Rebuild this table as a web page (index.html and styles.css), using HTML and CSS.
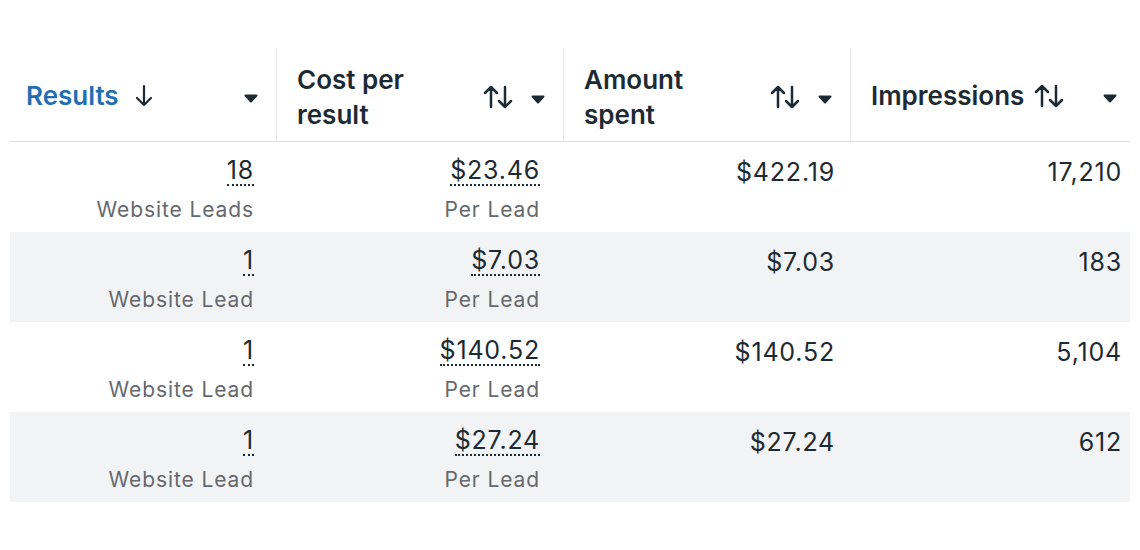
FILE: index.html
```html
<!DOCTYPE html>
<html>
<head>
<meta charset="utf-8">
<link rel="stylesheet" href="styles.css">
</head>
<body>
<div class="table">
  <div class="row head">
    <div class="hcell c1">
      <span class="htitle blue">Results</span>
      <svg class="sort single" viewBox="0 0 20 24" width="20" height="24"><path d="M10 2v19M3 14l7 7 7-7" fill="none" stroke="#1c2b33" stroke-width="2.2" stroke-linecap="round" stroke-linejoin="round"/></svg>
      <span class="grow"></span>
      <svg class="caret" viewBox="0 0 14 9" width="14" height="9"><path d="M1.5 1.5h11L7 7.5z" fill="#1c2b33" stroke="#1c2b33" stroke-width="2" stroke-linejoin="round"/></svg>
    </div>
    <div class="hcell c2">
      <span class="htitle">Cost per<br>result</span>
      <span class="grow"></span>
      <svg class="sort" viewBox="0 0 30 24" width="30" height="24"><path d="M8 22V2M2 8l6-6 6 6M22 2v20M16 16l6 6 6-6" fill="none" stroke="#1c2b33" stroke-width="2.5" stroke-linecap="round" stroke-linejoin="round"/></svg>
      <svg class="caret" viewBox="0 0 14 9" width="14" height="9"><path d="M1.5 1.5h11L7 7.5z" fill="#1c2b33" stroke="#1c2b33" stroke-width="2" stroke-linejoin="round"/></svg>
    </div>
    <div class="hcell c3">
      <span class="htitle">Amount<br>spent</span>
      <span class="grow"></span>
      <svg class="sort" viewBox="0 0 30 24" width="30" height="24"><path d="M8 22V2M2 8l6-6 6 6M22 2v20M16 16l6 6 6-6" fill="none" stroke="#1c2b33" stroke-width="2.5" stroke-linecap="round" stroke-linejoin="round"/></svg>
      <svg class="caret" viewBox="0 0 14 9" width="14" height="9"><path d="M1.5 1.5h11L7 7.5z" fill="#1c2b33" stroke="#1c2b33" stroke-width="2" stroke-linejoin="round"/></svg>
    </div>
    <div class="hcell c4">
      <span class="htitle">Impressions</span>
      <svg class="sort tight" viewBox="0 0 30 24" width="30" height="24"><path d="M8 22V2M2 8l6-6 6 6M22 2v20M16 16l6 6 6-6" fill="none" stroke="#1c2b33" stroke-width="2.5" stroke-linecap="round" stroke-linejoin="round"/></svg>
      <span class="grow"></span>
      <svg class="caret" viewBox="0 0 14 9" width="14" height="9"><path d="M1.5 1.5h11L7 7.5z" fill="#1c2b33" stroke="#1c2b33" stroke-width="2" stroke-linejoin="round"/></svg>
    </div>
  </div>

  <div class="row body">
    <div class="cell c1"><span class="num dotted">18</span><span class="sub">Website Leads</span></div>
    <div class="cell c2"><span class="num dotted">$23.46</span><span class="sub">Per Lead</span></div>
    <div class="cell c3"><span class="num">$422.19</span></div>
    <div class="cell c4"><span class="num">17,210</span></div>
  </div>
  <div class="row body alt">
    <div class="cell c1"><span class="num dotted">1</span><span class="sub">Website Lead</span></div>
    <div class="cell c2"><span class="num dotted">$7.03</span><span class="sub">Per Lead</span></div>
    <div class="cell c3"><span class="num">$7.03</span></div>
    <div class="cell c4"><span class="num">183</span></div>
  </div>
  <div class="row body">
    <div class="cell c1"><span class="num dotted">1</span><span class="sub">Website Lead</span></div>
    <div class="cell c2"><span class="num dotted">$140.52</span><span class="sub">Per Lead</span></div>
    <div class="cell c3"><span class="num">$140.52</span></div>
    <div class="cell c4"><span class="num">5,104</span></div>
  </div>
  <div class="row body alt">
    <div class="cell c1"><span class="num dotted">1</span><span class="sub">Website Lead</span></div>
    <div class="cell c2"><span class="num dotted">$27.24</span><span class="sub">Per Lead</span></div>
    <div class="cell c3"><span class="num">$27.24</span></div>
    <div class="cell c4"><span class="num">612</span></div>
  </div>
</div>
</body>
</html>
```

FILE: styles.css
```css
html, body {
  margin: 0;
  padding: 0;
  background: #ffffff;
}
body {
  font-family: Inter, Roboto, "Liberation Sans", sans-serif;
  color: #1c2b33;
  padding: 48px 10px 0 10px;
}
.table {
  width: 1120px;
}
.row {
  display: grid;
  grid-template-columns: 266px 287px 287px 280px;
}
.head {
  height: 93px;
  border-bottom: 1px solid #dcdfe3;
}
.hcell {
  display: flex;
  align-items: center;
  border-left: 1px solid #e6e8eb;
  padding: 4px 18px 0 20px;
}
.hcell.c1 {
  border-left: none;
  padding-left: 16px;
  padding-right: 18px;
  padding-top: 2px;
}
.hcell.c4 {
  padding-right: 13px;
  padding-top: 2px;
}
.htitle {
  font-size: 26px;
  font-weight: 600;
  line-height: 35px;
  color: #1c2b33;
}
.htitle.blue {
  color: #1f6fb2;
}
.grow {
  flex: 1;
}
.sort.single {
  margin-left: 15px;
}
.sort.tight {
  margin-left: 10px;
}
.caret {
  margin-left: 18px;
  margin-top: 5px;
}
.body {
  height: 90px;
}
.body.alt {
  background: #f2f3f5;
}
.cell {
  display: flex;
  flex-direction: column;
  align-items: flex-end;
  padding-top: 14px;
}
.cell.c1 { padding-right: 22px; }
.cell.c2 { padding-right: 23px; }
.cell.c3 { padding-right: 15px; }
.cell.c4 { padding-right: 8px; }
.num {
  font-size: 25px;
  letter-spacing: 0.8px;
  line-height: 32px;
  color: #1c2b33;
}
.num.dotted {
  border-bottom: 2px dotted #1c2b33;
  line-height: 28px;
  margin-bottom: 9px;
}
.sub {
  font-size: 21px;
  letter-spacing: 0.9px;
  line-height: 30px;
  color: #65686c;
}
```
